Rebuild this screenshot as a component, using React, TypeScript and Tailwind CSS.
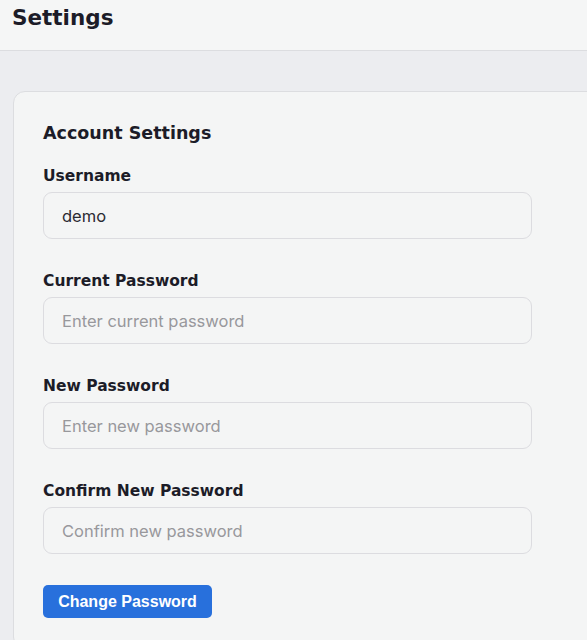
const heading = { fontFamily: '"DejaVu Sans", Verdana, sans-serif' };
const body = { fontFamily: 'Inter, "Liberation Sans", sans-serif' };

function Field({ label, value, placeholder }: { label: string; value?: string; placeholder?: string }) {
  return (
    <div className="flex flex-col">
      <label className="text-[15.5px] font-bold text-[#1c1c28] leading-[20px] mb-[6px]" style={heading}>
        {label}
      </label>
      <input
        type={value !== undefined ? "text" : "password"}
        defaultValue={value}
        placeholder={placeholder}
        className="w-[489px] h-[47px] rounded-[9px] border border-[#dcdce0] bg-[#f4f5f5] px-[18px] text-[16.5px] text-[#2b2b33] placeholder:text-[#98989c] outline-none"
        style={body}
      />
    </div>
  );
}

export default function App() {
  return (
    <div className="w-[587px] h-[640px] overflow-hidden bg-[#ecedf0]">
      <header className="h-[51px] bg-[#f5f6f6] border-b border-[#dcdde0] px-[12px] pt-[3px]">
        <h1 className="text-[21.5px] font-bold text-[#1c1c28] leading-[30px]" style={heading}>
          Settings
        </h1>
      </header>
      <main className="pt-[40px] pl-[13px]">
        <div className="w-[640px] rounded-[12px] border border-[#dcdde0] bg-[#f4f5f5] px-[29px] pt-[28px] pb-[30px]">
          <h2 className="text-[17.5px] font-bold text-[#1c1c28] leading-[26px] mb-[20px]" style={heading}>
            Account Settings
          </h2>
          <div className="flex flex-col gap-[32px]">
            <Field label="Username" value="demo" />
            <Field label="Current Password" placeholder="Enter current password" />
            <Field label="New Password" placeholder="Enter new password" />
            <Field label="Confirm New Password" placeholder="Confirm new password" />
          </div>
          <button
            className="mt-[31px] h-[33px] w-[169px] rounded-[5px] bg-[#2870dc] text-white text-[16px] font-bold"
            style={{ fontFamily: '"Liberation Sans", Arial, sans-serif' }}
          >
            Change Password
          </button>
        </div>
      </main>
    </div>
  );
}
